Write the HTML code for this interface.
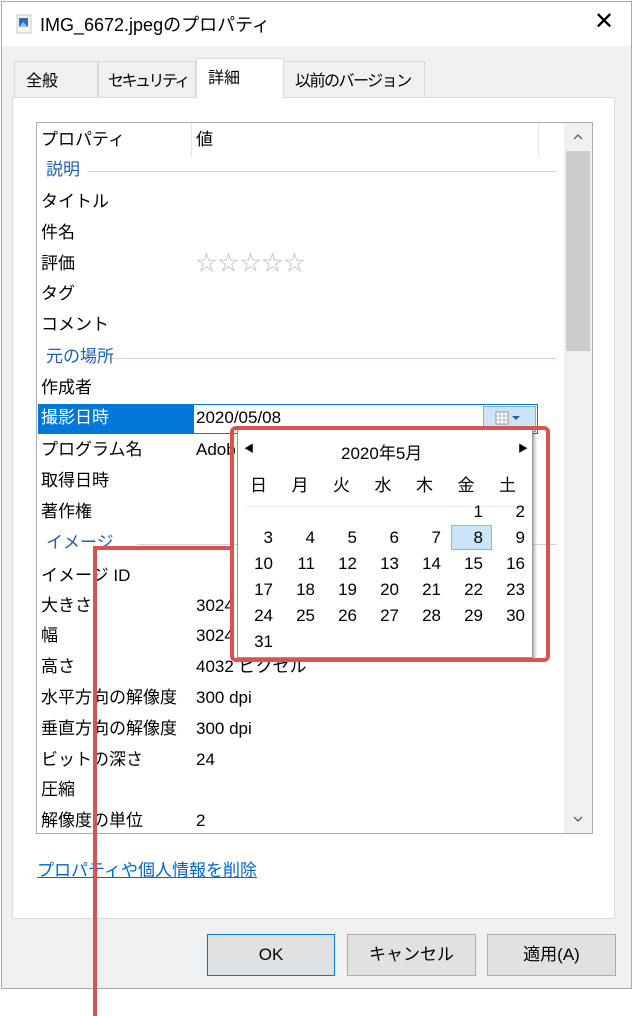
<!DOCTYPE html>
<html><head><meta charset="utf-8"><style>
*{margin:0;padding:0;box-sizing:border-box}
body{width:633px;height:1010px;background:#fff;position:relative;overflow:hidden;font-family:"Liberation Sans","Noto Sans CJK JP",sans-serif;font-size:17px;line-height:20px;color:#000}
.a{position:absolute;white-space:nowrap}
.win{position:absolute;left:1px;top:1px;width:631px;height:988px;border:1px solid #aaa;background:#f0f0f0}
.title{position:absolute;left:0;top:0;width:629px;height:44px;background:#fff}
.tab{position:absolute;top:61px;height:37px;border:1px solid #d9d9d9;border-bottom:none;background:#f0f0f0;font-size:16px;padding:10px 0 0 11px;white-space:nowrap;overflow:hidden}
.panel{position:absolute;left:12px;top:97px;width:603px;height:822px;background:#fff;border:1px solid #dcdcdc}
.list{position:absolute;left:36px;top:122px;width:557px;height:712px;border:1px solid #acacac;background:#fff}
.r{position:absolute;left:41px;white-space:nowrap}
.v{position:absolute;left:196px;white-space:nowrap}
.sec{position:absolute;left:46px;color:#1e5eb3}
.btn{position:absolute;top:934px;height:42px;border:1px solid #adadad;background:#e1e1e1;text-align:center;line-height:40px;font-size:17px}
.cal{position:absolute;left:237px;top:429px;width:296px;height:229px;background:#fff;border:1px solid #999;box-shadow:2px 2px 3px rgba(0,0,0,.3)}
.d{position:absolute;width:30px;text-align:right}
</style></head><body>
<div class="win">
<div class="title">
<svg class="a" style="left:14px;top:12px" width="16" height="20"><rect x="1" y="1" width="14" height="18" fill="#f4f4f4" stroke="#ccc"/><rect x="3" y="4" width="9" height="9" fill="#2d6fb5"/><path d="M3 13 L7 8 L12 13Z" fill="#8ec3ea"/></svg>
<div class="a" style="left:38px;top:13px;font-size:18px">IMG_6672.jpegのプロパティ</div>
<div class="a" style="left:592px;top:10px;font-size:24px;font-weight:300">✕</div>
</div>
</div>
<div class="tab" style="left:14px;width:84px">全般</div>
<div class="tab" style="left:98px;width:98px;letter-spacing:-2.5px;padding-left:9px">セキュリティ</div>
<div class="tab" style="left:283px;width:142px;letter-spacing:-1.5px">以前のバージョン</div>
<div class="panel"></div>
<div class="tab" style="left:196px;top:58px;width:88px;height:41px;background:#fff;border-color:#dcdcdc;z-index:2;padding-top:10px">詳細</div>
<div class="list">
<div class="a" style="left:154px;top:0;width:1px;height:34px;background:#e5e5e5"></div>
<div class="a" style="left:501px;top:0;width:1px;height:34px;background:#e5e5e5"></div>
<div class="a" style="left:527px;top:0;width:28px;height:710px;background:#f0f0f0"></div>
<div class="a" style="left:529px;top:28px;width:24px;height:200px;background:#cdcdcd"></div>
<svg class="a" style="left:535px;top:10px" width="12" height="8"><path d="M2 6L6 2L10 6" stroke="#606060" fill="none" stroke-width="1.3"/></svg>
<svg class="a" style="left:535px;top:692px" width="12" height="8"><path d="M2 2L6 6L10 2" stroke="#606060" fill="none" stroke-width="1.3"/></svg>
<div class="a" style="left:50px;top:48px;width:470px;height:1px;background:#c5d6ea"></div>
<div class="a" style="left:75px;top:235px;width:445px;height:1px;background:#c5d6ea"></div>
<div class="a" style="left:100px;top:421px;width:420px;height:1px;background:#c5d6ea"></div>
</div>
<div class="r" style="top:130px">プロパティ</div><div class="v" style="top:130px">値</div>
<div class="sec" style="top:160px">説明</div>
<div class="r" style="top:192px">タイトル</div>
<div class="r" style="top:223px">件名</div>
<div class="r" style="top:254px">評価</div><div class="v" style="top:252px;color:#bbb;font-size:21px;line-height:24px;letter-spacing:1px">☆☆☆☆☆</div>
<div class="r" style="top:284px">タグ</div>
<div class="r" style="top:315px">コメント</div>
<div class="sec" style="top:347px">元の場所</div>
<div class="r" style="top:378px">作成者</div>
<div class="a" style="left:38px;top:404px;width:155px;height:30px;background:#0078d7"></div>
<div class="r" style="top:408px;color:#fff">撮影日時</div>
<div class="a" style="left:193px;top:404px;width:345px;height:30px;border:1px solid #0078d7;background:#fff"></div>
<div class="a" style="left:483px;top:406px;width:53px;height:26px;background:#cce4f7;border:1px solid #7eb4ea"></div>
<svg class="a" style="left:495px;top:411px" width="30" height="16"><rect x="1" y="1" width="12" height="12" fill="#fff" stroke="#999"/><path d="M1 5H13M1 9H13M5 1V13M9 1V13" stroke="#bbb"/><path d="M17 5H25L21 9Z" fill="#2b5d9b"/></svg>
<div class="v" style="top:408px">2020/05/08</div>
<div class="r" style="top:440px">プログラム名</div><div class="v" style="top:440px">Adob</div>
<div class="r" style="top:471px">取得日時</div>
<div class="r" style="top:502px">著作権</div>
<div class="sec" style="top:533px">イメージ</div>
<div class="r" style="top:566px">イメージ ID</div>
<div class="r" style="top:596px">大きさ</div><div class="v" style="top:596px">3024</div>
<div class="r" style="top:626px">幅</div><div class="v" style="top:626px">3024</div>
<div class="r" style="top:657px">高さ</div><div class="v" style="top:657px">4032 ピクセル</div>
<div class="r" style="top:688px">水平方向の解像度</div><div class="v" style="top:688px">300 dpi</div>
<div class="r" style="top:719px">垂直方向の解像度</div><div class="v" style="top:719px">300 dpi</div>
<div class="r" style="top:750px">ビットの深さ</div><div class="v" style="top:750px">24</div>
<div class="r" style="top:780px">圧縮</div>
<div class="r" style="top:811px">解像度の単位</div><div class="v" style="top:811px">2</div>
<div class="a" style="left:37px;top:861px;color:#0066cc;text-decoration:underline">プロパティや個人情報を削除</div>
<div class="btn" style="left:207px;width:128px;border:1px solid #0078d7">OK</div>
<div class="btn" style="left:347px;width:129px">キャンセル</div>
<div class="btn" style="left:487px;width:129px">適用(A)</div>
<div class="cal">
<div class="a" style="left:6px;top:14px;font-size:10px;line-height:12px">◀</div>
<div class="a" style="left:280px;top:14px;font-size:10px;line-height:12px">▶</div>
<div class="a" style="left:103px;top:14px">2020年5月</div>
<div class="a" style="left:12px;top:46px;letter-spacing:24.5px">日月火水木金土</div>
<div class="a" style="left:6px;top:76px;width:284px;height:1px;background:#eee"></div>
<div class="a" style="left:213px;top:95px;width:41px;height:25px;background:#cce4f7;border:1px solid #99b4d1"></div>
<div class="d" style="left:215px;top:72px">1</div><div class="d" style="left:257px;top:72px">2</div>
<div class="d" style="left:5px;top:98px">3</div><div class="d" style="left:47px;top:98px">4</div><div class="d" style="left:89px;top:98px">5</div><div class="d" style="left:131px;top:98px">6</div><div class="d" style="left:173px;top:98px">7</div><div class="d" style="left:215px;top:98px">8</div><div class="d" style="left:257px;top:98px">9</div>
<div class="d" style="left:5px;top:124px">10</div><div class="d" style="left:47px;top:124px">11</div><div class="d" style="left:89px;top:124px">12</div><div class="d" style="left:131px;top:124px">13</div><div class="d" style="left:173px;top:124px">14</div><div class="d" style="left:215px;top:124px">15</div><div class="d" style="left:257px;top:124px">16</div>
<div class="d" style="left:5px;top:150px">17</div><div class="d" style="left:47px;top:150px">18</div><div class="d" style="left:89px;top:150px">19</div><div class="d" style="left:131px;top:150px">20</div><div class="d" style="left:173px;top:150px">21</div><div class="d" style="left:215px;top:150px">22</div><div class="d" style="left:257px;top:150px">23</div>
<div class="d" style="left:5px;top:176px">24</div><div class="d" style="left:47px;top:176px">25</div><div class="d" style="left:89px;top:176px">26</div><div class="d" style="left:131px;top:176px">27</div><div class="d" style="left:173px;top:176px">28</div><div class="d" style="left:215px;top:176px">29</div><div class="d" style="left:257px;top:176px">30</div>
<div class="d" style="left:5px;top:202px">31</div>
</div>
<div class="a" style="left:230px;top:426px;width:320px;height:236px;border:4px solid #d9534f;border-radius:6px"></div>
<div class="a" style="left:93px;top:546px;width:139px;height:4px;background:#d9534f"></div>
<div class="a" style="left:93px;top:546px;width:4px;height:470px;background:#d9534f"></div>
</body></html>
